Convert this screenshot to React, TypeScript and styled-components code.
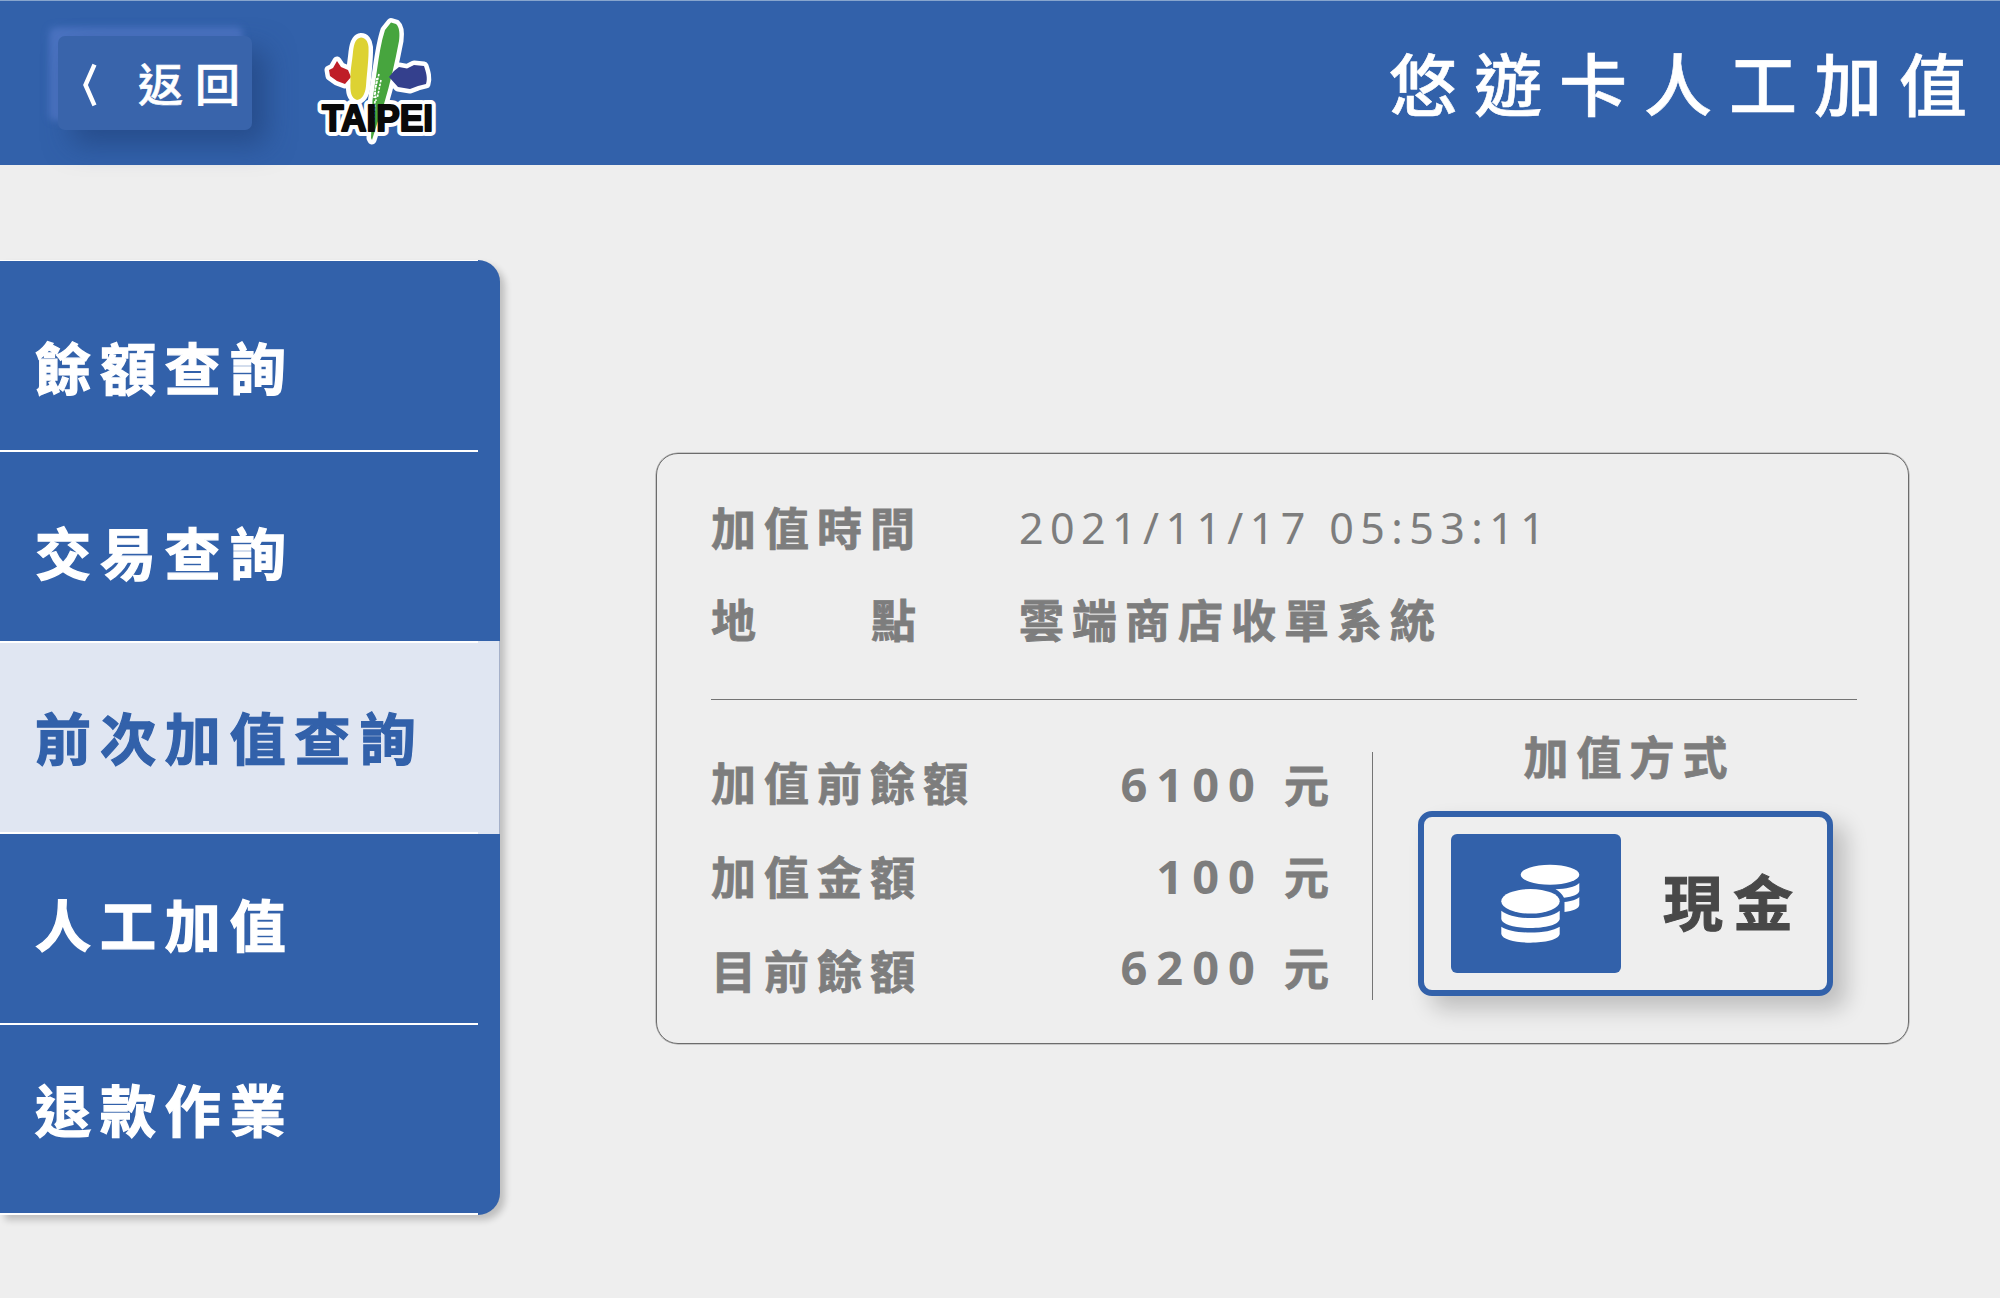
import React from "react";
import styled, { createGlobalStyle } from "styled-components";

const BLUE = "#3261aa";
const GREY = "#7d7d7d";

const GlobalStyle = createGlobalStyle`
  *, *::before, *::after { box-sizing: border-box; }
  html, body { margin: 0; padding: 0; background: #eeeeee; }
  body {
    font-family: "Noto Sans CJK TC", sans-serif;
    line-height: 1;
    overflow: hidden;
  }
  button { font-family: inherit; cursor: pointer; }
`;

const Page = styled.div`
  width: 2000px;
  height: 1298px;
  display: flex;
  flex-direction: column;
  background: #eeeeee;
  white-space: nowrap;
`;

const Header = styled.header`
  height: 165px;
  flex: none;
  display: flex;
  align-items: flex-start;
  background: ${BLUE};
  border-top: 1px solid #87a5cd;
`;

const BackButton = styled.button`
  margin: 35px 0 0 58px;
  width: 194px;
  height: 94px;
  padding: 0 0 0 3px;
  display: flex;
  align-items: center;
  border: 0;
  border-radius: 7px;
  background: #3964ab;
  box-shadow: 14px 14px 28px rgba(30, 60, 115, 0.55), -9px -9px 7px #4b73c1;
  color: #fff;
`;

const BackArrow = styled.svg`
  width: 16px;
  height: 44px;
  margin-left: 21px;
  margin-top: 4px;
`;

const BackLabel = styled.span`
  margin-left: 40px;
  padding-bottom: 2px;
  font-size: 45px;
  font-weight: 500;
  letter-spacing: 12px;
  -webkit-text-stroke: 0.6px currentColor;
`;

const Logo = styled.svg`
  width: 150px;
  height: 160px;
  margin-left: 48px;
  margin-top: -1px;
`;

const HeaderTitle = styled.h1`
  margin: 47px 16px 0 auto;
  font-size: 68px;
  font-weight: 500;
  line-height: 68px;
  letter-spacing: 17px;
  color: #fff;
  -webkit-text-stroke: 0.6px currentColor;
`;

const Body = styled.div`
  flex: 1;
  display: flex;
  align-items: flex-start;
`;

const Sidebar = styled.nav`
  width: 500px;
  margin-top: 95px;
  display: flex;
  flex-direction: column;
  background:
    linear-gradient(#fff, #fff) 0 0 / 478px 1px no-repeat,
    ${BLUE};
  border-radius: 0 22px 22px 0;
  box-shadow: 5px 5px 7px rgba(0, 0, 0, 0.2);
`;

const MenuItem = styled.a<{ $active?: boolean; $line: boolean; $height: number; $top: number }>`
  height: ${(p) => p.$height}px;
  padding: ${(p) => p.$top}px 0 0 35px;
  font-size: 56px;
  font-weight: 700;
  line-height: 56px;
  letter-spacing: 8.9px;
  -webkit-text-stroke: 1.3px currentColor;
  color: ${(p) => (p.$active ? BLUE : "#fff")};
  background:
    linear-gradient(#fff, #fff) 0 100% / ${(p) => (p.$line ? 478 : 0)}px 2px no-repeat,
    linear-gradient(#fff, #fff) 0 0 / ${(p) => (p.$active ? 478 : 0)}px 2px no-repeat,
    ${(p) => (p.$active ? "#e0e6f2" : "transparent")};
  border-right: ${(p) => (p.$active ? "1px solid #a6b1c9" : "0")};
`;

const TwoDotGlyph = styled.span`
  font-family: "Noto Sans CJK JP", sans-serif;
`;

const Card = styled.section`
  width: 1253px;
  height: 591px;
  margin: 288px 0 0 156px;
  padding: 48px 51px 0 54px;
  display: flex;
  flex-direction: column;
  border: 1px solid #6c6c6c;
  box-shadow: 0 0 0 0.5px #a0a0a0;
  border-radius: 22px;
  color: ${GREY};
  font-size: 45px;
  font-weight: 700;
  line-height: 50px;
  letter-spacing: 8px;
  -webkit-text-stroke: 0.8px currentColor;
`;

const InfoRow = styled.div`
  display: flex;
  height: 92px;
`;

const InfoLabel = styled.div`
  width: 308px;
`;

const SpreadLabel = styled(InfoLabel)`
  display: flex;
  justify-content: space-between;
  padding-right: 95px;
`;

const DateValue = styled.div`
  padding-top: 1px;
  font-family: "Noto Sans", sans-serif;
  font-weight: 400;
  font-size: 43px;
  letter-spacing: 6.4px;
  -webkit-text-stroke: 0;
`;

const Rule = styled.hr`
  width: 1146px;
  height: 1px;
  margin: 13px 0 0;
  border: 0;
  background: #747474;
  flex: none;
`;

const Lower = styled.div`
  display: flex;
  align-items: flex-start;
`;

const Amounts = styled.div`
  width: 662px;
  height: 248px;
  margin-top: 52px;
  display: flex;
  justify-content: space-between;
  border-right: 1px solid #747474;
`;

const Column = styled.div<{ $gap: number; $top: number }>`
  display: flex;
  flex-direction: column;
  gap: ${(p) => p.$gap}px;
  padding-top: ${(p) => p.$top}px;
`;

const Amount = styled.div`
  display: flex;
  justify-content: flex-end;
  padding-right: 35px;
`;

const Digits = styled.span`
  font-family: "Noto Sans", sans-serif;
  font-size: 47px;
  letter-spacing: 9px;
  margin-right: 20px;
  -webkit-text-stroke: 0;
`;

const Method = styled.div`
  width: 415px;
  margin: 31px 0 0 45px;
  display: flex;
  flex-direction: column;
  align-items: center;
`;

const MethodTitle = styled.div`
  padding-left: 8px;
`;

const CashButton = styled.button`
  width: 415px;
  height: 185px;
  margin-top: 30px;
  padding: 0 0 0 27px;
  display: flex;
  align-items: center;
  border: 6px solid ${BLUE};
  border-radius: 14px;
  background: #eeeeee;
  box-shadow: 13px 13px 22px rgba(0, 0, 0, 0.2);
  color: #484848;
`;

const CashLabel = styled.span`
  padding-bottom: 9px;
  font-size: 60px;
  font-weight: 700;
  letter-spacing: 10px;
  -webkit-text-stroke: 1px currentColor;
`;

const CashIcon = styled.span`
  width: 170px;
  height: 139px;
  margin-right: 42px;
  display: flex;
  border-radius: 6px;
  background: ${BLUE};
`;

const menu = [
  { label: "餘額查詢", height: 192, top: 78, line: true },
  { label: "交易查詢", height: 189, top: 71, line: false },
  {
    label: (
      <>
        前<TwoDotGlyph>次</TwoDotGlyph>加值查詢
      </>
    ),
    height: 193,
    top: 67,
    line: true,
    active: true,
  },
  { label: "人工加值", height: 191, top: 61, line: true },
  { label: "退款作業", height: 190, top: 55, line: true },
];

const amounts = ["6100", "100", "6200"];

function LogoText({ color, stroke }: { color: string; stroke: number }) {
  return (
    <text
      x="22"
      y="130.500"
      fontFamily="Liberation Sans, Arial, sans-serif"
      fontWeight="700"
      fontSize="36"
      textLength="111"
      lengthAdjust="spacingAndGlyphs"
      fill={color}
      stroke={color}
      strokeWidth={stroke}
      strokeLinejoin="round"
    >
      TAIPEI
    </text>
  );
}

function TaipeiLogo() {
  const shapes = (
    <>
      <path fill="#bf1e27" d="M37 61 L33 68 L29 70 L30 76 L37 81 L45 84 L51 77 L48 70 L41 67 Z" />
      <path
        fill="#ddd233"
        d="M61 37.500 C56 38 54 43 53 52 C52 63 50 70 50.500 82 C50 92 51 98 57 100 C62 99 65 95 66 86 C67 72 69 58 68.500 47 C68 41 65 37.500 61 37.500 Z"
      />
      <path
        fill="#47a53e"
        d="M91 22.500 L85 30 C81 42 79 56 77 70 L72.500 100 L71 138 L72 140 L77 124 L84 104 C90 84 95 62 99 41 C100 34 99.500 27 96 24 Z"
      />
      <path
        fill="#34408d"
        d="M89 77 L94 71 L99 67 L107 68.500 L114 65 L124 66 C126 72 128 78 126 84 L118 86 L110 89 L98 87 Z"
      />
    </>
  );
  return (
    <Logo viewBox="0 0 150 160" role="img" aria-label="Taipei">
      <g stroke="#fff" strokeWidth="9" strokeLinejoin="round">
        {shapes}
      </g>
      <LogoText color="#fff" stroke={10} />
      {shapes}
      <path
        d="M79 74 L75 90 L76 101 M81 80 L77.500 97 M77 78 L74 98 M75 101 L73.500 122"
        stroke="#fff"
        strokeWidth="1.600"
        strokeDasharray="2.500 1.200"
        fill="none"
      />
      <LogoText color="#0a0a0a" stroke={2} />
    </Logo>
  );
}

function CoinsIcon() {
  return (
    <svg width="170" height="139" viewBox="1451 833 170 139" fill="#fff">
      <ellipse cx="1550" cy="873.700" rx="29.300" ry="10" />
      <path d="M1579.300 882 V890 C1579 893 1573 896 1564 896.700 C1562 893 1559 890 1555.500 888.300 C1566 888 1575 886 1579.300 882 Z" />
      <path d="M1579.300 896 V904 C1579 907.500 1573 910 1564.500 911 V901 C1571 900.500 1577 898.500 1579.300 896 Z" />
      <ellipse cx="1530.500" cy="900.300" rx="29.200" ry="12.300" />
      <path d="M1501.300 909.700 C1513 919.500 1548 919.500 1559.700 909.700 V918 C1558 930 1503 930 1501.300 918 Z" />
      <path d="M1501.300 925.700 C1513 933.500 1548 933.500 1559.700 925.700 V933 C1558 944.500 1503 944.500 1501.300 933 Z" />
    </svg>
  );
}

export default function App() {
  return (
    <Page>
      <GlobalStyle />
      <Header>
        <BackButton>
          <BackArrow viewBox="0 0 16 44" fill="none" stroke="#fff" strokeWidth="4.400">
            <path d="M12.500 1.500 L3.500 22 L12.500 42.500" />
          </BackArrow>
          <BackLabel>返回</BackLabel>
        </BackButton>
        <TaipeiLogo />
        <HeaderTitle>悠遊卡人工加值</HeaderTitle>
      </Header>
      <Body>
        <Sidebar>
          {menu.map((m, i) => (
            <MenuItem key={i} $height={m.height} $top={m.top} $line={m.line} $active={m.active}>
              {m.label}
            </MenuItem>
          ))}
        </Sidebar>
        <Card>
          <InfoRow>
            <InfoLabel>加值時間</InfoLabel>
            <DateValue>2021/11/17 05:53:11</DateValue>
          </InfoRow>
          <InfoRow>
            <SpreadLabel>
              <span>地</span>
              <span>點</span>
            </SpreadLabel>
            <div>雲端商店收單系統</div>
          </InfoRow>
          <Rule />
          <Lower>
            <Amounts>
              <Column $gap={44} $top={5}>
                <div>加值前餘額</div>
                <div>加值金額</div>
                <div>目前餘額</div>
              </Column>
              <Column $gap={41.5} $top={7}>
                {amounts.map((a) => (
                  <Amount key={a}>
                    <Digits>{a}</Digits>元
                  </Amount>
                ))}
              </Column>
            </Amounts>
            <Method>
              <MethodTitle>加值方式</MethodTitle>
              <CashButton>
                <CashIcon>
                  <CoinsIcon />
                </CashIcon>
                <CashLabel>現金</CashLabel>
              </CashButton>
            </Method>
          </Lower>
        </Card>
      </Body>
    </Page>
  );
}
